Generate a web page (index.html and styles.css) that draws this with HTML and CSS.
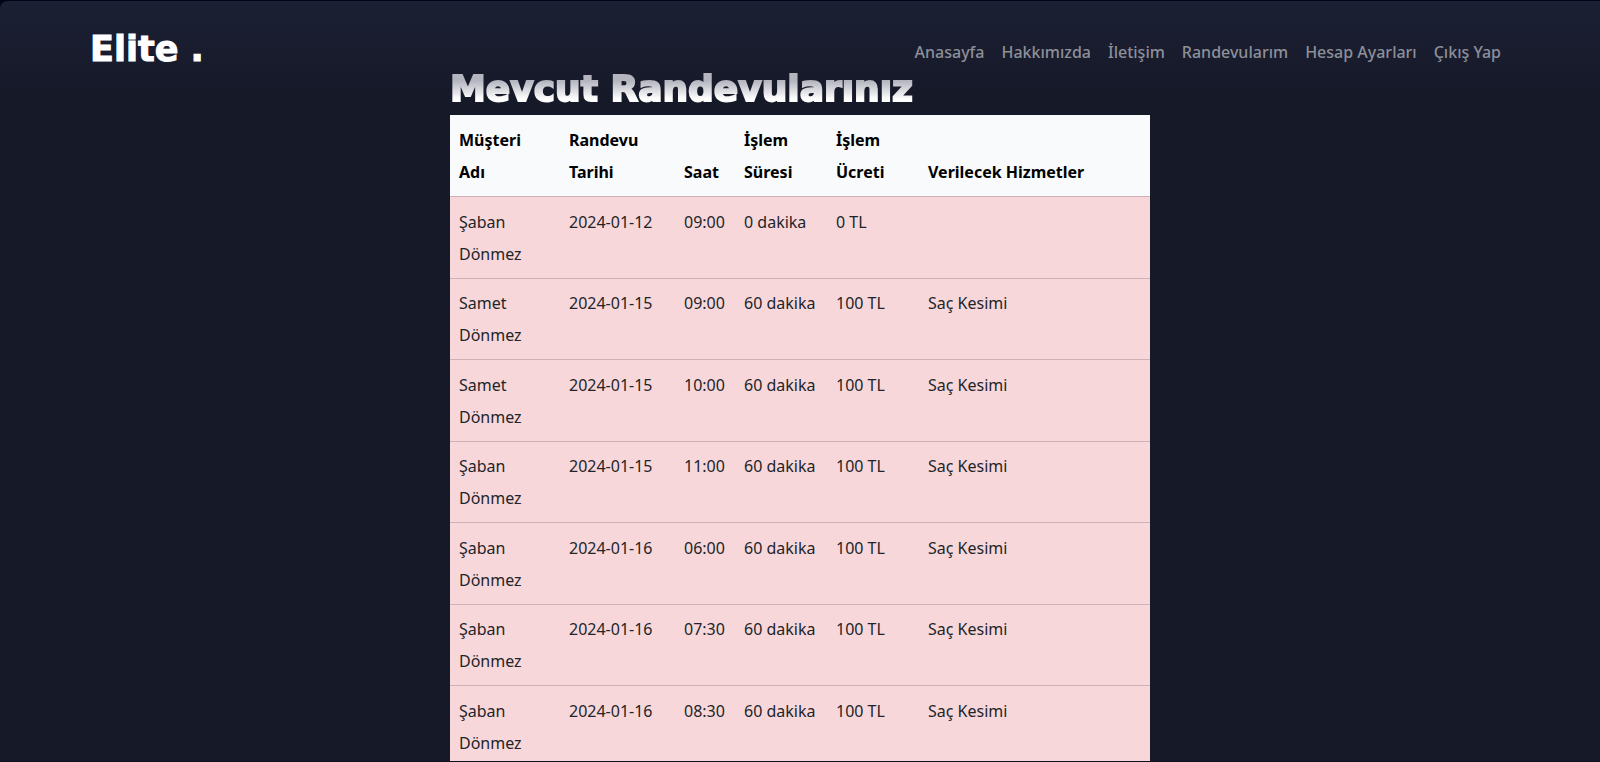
FILE: index.html
```html
<!DOCTYPE html>
<html lang="tr">
<head>
<meta charset="utf-8">
<meta name="viewport" content="width=device-width, initial-scale=1">
<title>Elite - Randevularım</title>
<link rel="stylesheet" href="styles.css">
</head>
<body>
<div class="page">
  <header class="header">
    <a class="logo" href="#">Elite .</a>
    <nav class="nav">
      <a href="#">Anasayfa</a>
      <a href="#">Hakkımızda</a>
      <a href="#">İletişim</a>
      <a href="#">Randevularım</a>
      <a href="#">Hesap Ayarları</a>
      <a href="#">Çıkış Yap</a>
    </nav>
  </header>
  <main class="content">
    <h1 class="title">Mevcut Randevularınız</h1>
    <table class="table">
      <colgroup>
        <col class="col-name"><col class="col-date"><col class="col-time"><col class="col-length"><col class="col-price"><col>
      </colgroup>
      <thead>
        <tr><th>Müşteri Adı</th><th>Randevu Tarihi</th><th>Saat</th><th>İşlem Süresi</th><th>İşlem Ücreti</th><th>Verilecek Hizmetler</th></tr>
      </thead>
      <tbody>
        <tr><td>Şaban Dönmez</td><td>2024-01-12</td><td>09:00</td><td>0 dakika</td><td>0 TL</td><td></td></tr>
        <tr><td>Samet Dönmez</td><td>2024-01-15</td><td>09:00</td><td>60 dakika</td><td>100 TL</td><td>Saç Kesimi</td></tr>
        <tr><td>Samet Dönmez</td><td>2024-01-15</td><td>10:00</td><td>60 dakika</td><td>100 TL</td><td>Saç Kesimi</td></tr>
        <tr><td>Şaban Dönmez</td><td>2024-01-15</td><td>11:00</td><td>60 dakika</td><td>100 TL</td><td>Saç Kesimi</td></tr>
        <tr><td>Şaban Dönmez</td><td>2024-01-16</td><td>06:00</td><td>60 dakika</td><td>100 TL</td><td>Saç Kesimi</td></tr>
        <tr><td>Şaban Dönmez</td><td>2024-01-16</td><td>07:30</td><td>60 dakika</td><td>100 TL</td><td>Saç Kesimi</td></tr>
        <tr><td>Şaban Dönmez</td><td>2024-01-16</td><td>08:30</td><td>60 dakika</td><td>100 TL</td><td>Saç Kesimi</td></tr>
      </tbody>
    </table>
  </main>
</div>
</body>
</html>
```
FILE: styles.css
```css
* { box-sizing: border-box; }

body {
  margin: 0;
  background: #020518;
  color: #212529;
  font: 16px/32px "Noto Sans", "Open Sans", sans-serif;
}

.page {
  height: 100vh;
  overflow: hidden;
  border-top: 1px solid #020518;
  border-bottom: 1px solid #0e1020;
  border-top-left-radius: 8px;
  background: #161928 linear-gradient(#1b2034, #161928) no-repeat top / 100% 96px;
}

.header {
  display: flex;
  justify-content: space-between;
  align-items: center;
  height: 72px;
  padding: 24px 99px 0 90px;
}

.logo {
  color: #fff;
  font: 700 35px/48px "DejaVu Sans", sans-serif;
  -webkit-text-stroke: 1px #fff;
  text-decoration: none;
}

.nav {
  display: flex;
  gap: 17px;
  padding-top: 6px;
}

.nav a {
  color: #8d8f99;
  font-weight: 500;
  text-decoration: none;
}

.content {
  width: 100%;
  max-width: 700px;
  margin: 0 auto;
}

.title {
  margin: 0;
  padding-bottom: 10px;
  font: 700 36px/32px "DejaVu Sans", sans-serif;
  white-space: nowrap;
  color: transparent;
  -webkit-text-stroke: 2px transparent;
  background: linear-gradient(#b4b5bf 8px, #fff 26px);
  background-clip: text;
}

.table {
  width: 100%;
  table-layout: fixed;
  border-collapse: separate;
  border-spacing: 0;
  background: #f8d7da;
}

.col-name { width: 110px; }
.col-date { width: 115px; }
.col-time { width: 60px; }
.col-length { width: 92px; }
.col-price { width: 92px; }

.table th,
.table td {
  padding: 8px 9px;
  border-bottom: 1px solid #ccb2b7;
  text-align: left;
  vertical-align: top;
}

.table th {
  padding-top: 9px;
  background: #f8fafc;
  color: #000;
  font-weight: 700;
  vertical-align: bottom;
}

.table tbody tr:nth-child(odd) td { padding-top: 9px; }
```
